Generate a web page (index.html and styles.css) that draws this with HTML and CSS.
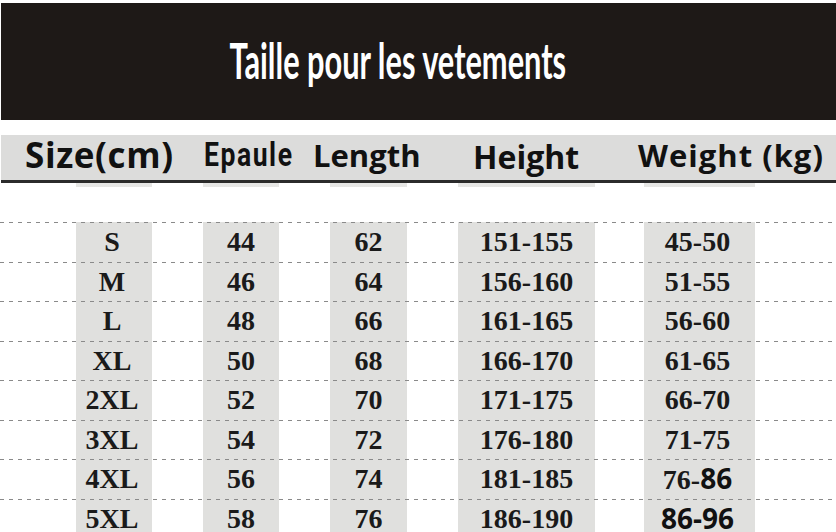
FILE: index.html
```html
<!DOCTYPE html>
<html lang="fr">
<head>
<meta charset="utf-8">
<title>Taille pour les vetements</title>
<link rel="stylesheet" href="styles.css">
</head>
<body>
<div class="page">
  <div class="banner"><span class="title">Taille pour les vetements</span></div>
  <div class="header">
    <div class="h h-size">Size(cm)</div>
    <div class="h h-epaule"><span class="narrow">Epaule</span></div>
    <div class="h h-length">Length</div>
    <div class="h h-height">Height</div>
    <div class="h h-weight">Weight (kg)</div>
  </div>
  <div class="stubs"></div>
  <div class="table">
    <div class="row"><div class="c c1">S</div><div class="c c2">44</div><div class="c c3">62</div><div class="c c4">151-155</div><div class="c c5">45-50</div></div>
    <div class="row"><div class="c c1">M</div><div class="c c2">46</div><div class="c c3">64</div><div class="c c4">156-160</div><div class="c c5">51-55</div></div>
    <div class="row"><div class="c c1">L</div><div class="c c2">48</div><div class="c c3">66</div><div class="c c4">161-165</div><div class="c c5">56-60</div></div>
    <div class="row"><div class="c c1">XL</div><div class="c c2">50</div><div class="c c3">68</div><div class="c c4">166-170</div><div class="c c5">61-65</div></div>
    <div class="row"><div class="c c1">2XL</div><div class="c c2">52</div><div class="c c3">70</div><div class="c c4">171-175</div><div class="c c5">66-70</div></div>
    <div class="row"><div class="c c1">3XL</div><div class="c c2">54</div><div class="c c3">72</div><div class="c c4">176-180</div><div class="c c5">71-75</div></div>
    <div class="row"><div class="c c1">4XL</div><div class="c c2">56</div><div class="c c3">74</div><div class="c c4">181-185</div><div class="c c5">76-<span class="sans">86</span></div></div>
    <div class="row"><div class="c c1">5XL</div><div class="c c2">58</div><div class="c c3">76</div><div class="c c4">186-190</div><div class="c c5"><span class="sans">86-96</span></div></div>
  </div>
</div>
</body>
</html>
```
FILE: styles.css
```css
html, body {
  margin: 0;
  padding: 0;
  background: #ffffff;
}
.page {
  width: 836px;
  height: 532px;
  overflow: hidden;
  background: #ffffff;
}
.banner {
  margin: 3px 0 0 1px;
  height: 117px;
  box-sizing: border-box;
  background: #1e1917;
  display: flex;
  justify-content: center;
  align-items: flex-start;
  padding: 32px 42px 0 0;
}
.title {
  display: inline-block;
  font-family: Lato, "DejaVu Sans", sans-serif;
  font-weight: 700;
  font-size: 50px;
  line-height: 1;
  color: #ffffff;
  transform: scaleX(0.615);
  transform-origin: center;
  white-space: nowrap;
}
.header {
  margin: 15px 0 0 1px;
  height: 45px;
  background: #dcdcdb;
  border-bottom: 3px solid #2b2b2b;
  display: grid;
  grid-template-columns: 179px 109px 160px 165px 1fr;
  padding-left: 24px;
  align-items: start;
  color: #111111;
  font-family: "Open Sans", sans-serif;
  font-weight: 700;
  line-height: 1;
  white-space: nowrap;
}
.h-size {
  font-size: 35px;
  letter-spacing: 0.6px;
  padding-top: 2px;
}
.h-epaule {
  font-family: Roboto, sans-serif;
  font-size: 34px;
  letter-spacing: 2px;
  padding-top: 2px;
}
.narrow {
  display: inline-block;
  transform: scaleX(0.78);
  transform-origin: left center;
}
.h-length {
  font-size: 31px;
  padding-top: 5px;
}
.h-height {
  font-size: 32px;
  padding-top: 6px;
}
.h-weight {
  font-size: 31px;
  letter-spacing: 1px;
  padding-top: 5px;
}
.stubs, .table {
  background-image: linear-gradient(90deg,
    transparent 0 76px, #e0e0de 76px 152px,
    transparent 152px 203px, #e0e0de 203px 279px,
    transparent 279px 330px, #e0e0de 330px 407px,
    transparent 407px 458px, #e0e0de 458px 595px,
    transparent 595px 644px, #e0e0de 644px 755px,
    transparent 755px 836px);
}
.stubs {
  height: 4px;
  opacity: 0.8;
}
.table {
  margin-top: 35px;
  height: 320px;
}
.row {
  height: 39.5px;
  display: grid;
  grid-template-columns: 76px 76px 51px 76px 51px 77px 51px 137px 49px 111px 1fr;
  background-image: repeating-linear-gradient(90deg, #8a8a8a 0 4px, transparent 4px 9px);
  background-size: 100% 1px;
  background-repeat: no-repeat;
  background-position: 0 0;
  font-family: "Liberation Serif", serif;
  font-weight: 700;
  font-size: 28px;
  line-height: 39.5px;
  color: #1a1a1a;
  text-align: center;
  white-space: nowrap;
}
.c1 { grid-column: 2; padding-right: 4px; }
.c2 { grid-column: 4; }
.c3 { grid-column: 6; }
.c4 { grid-column: 8; }
.c5 { grid-column: 10; padding-right: 4px; }
.sans {
  font-family: "Open Sans", sans-serif;
  font-weight: 700;
  font-size: 28px;
  color: #111111;
}
```
